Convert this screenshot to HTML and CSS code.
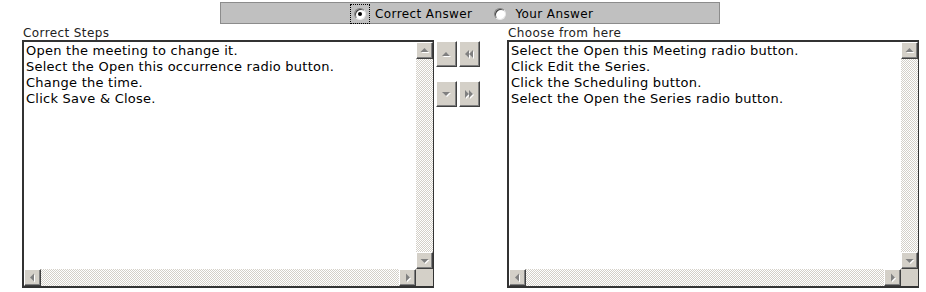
FILE: index.html
```html
<!DOCTYPE html>
<html lang="en">
<head>
    <meta charset="UTF-8">
    <title>Ordering Steps</title>
    <link rel="stylesheet" href="styles.css">
</head>
<body>
    <div class="answer-bar">
        <label class="choice">
            <span class="radio-wrap focused"><span class="radio checked"></span></span>
            <span>Correct Answer</span>
        </label>
        <label class="choice">
            <span class="radio-wrap"><span class="radio"></span></span>
            <span>Your Answer</span>
        </label>
    </div>

    <div class="workspace">
        <div class="panel">
            <div class="panel-title">Correct Steps</div>
            <div class="listbox">
                <div class="list-body">
                    <div class="list-text">
                        <div>Open the meeting to change it.</div>
                        <div>Select the Open this occurrence radio button.</div>
                        <div>Change the time.</div>
                        <div>Click Save &amp; Close.</div>
                    </div>
                    <div class="vscroll">
                        <div class="sbtn"><svg viewBox="0 0 15 15"><polygon class="shade" points="4.5,10 12.5,10 8.5,6"/><polygon points="3.5,9 11.5,9 7.5,5"/></svg></div>
                        <div class="track"></div>
                        <div class="sbtn"><svg viewBox="0 0 15 15"><polygon class="shade" points="4.5,7 12.5,7 8.5,11"/><polygon points="3.5,6 11.5,6 7.5,10"/></svg></div>
                    </div>
                </div>
                <div class="hscroll">
                    <div class="sbtn"><svg viewBox="0 0 15 15"><polygon class="shade" points="10,4.5 10,12.5 6,8.5"/><polygon points="9,3.5 9,11.5 5,7.5"/></svg></div>
                    <div class="track"></div>
                    <div class="sbtn"><svg viewBox="0 0 15 15"><polygon class="shade" points="7,4.5 7,12.5 11,8.5"/><polygon points="6,3.5 6,11.5 10,7.5"/></svg></div>
                    <div class="corner"></div>
                </div>
            </div>
        </div>

        <div class="movers">
            <div class="mover-row">
                <button class="mbtn" title="Move up"><svg viewBox="0 0 19 24"><polygon class="shade" points="6,15 14,15 10,11"/><polygon points="5,14 13,14 9,10"/></svg></button>
                <button class="mbtn" title="Move left"><svg viewBox="0 0 19 24"><polygon class="shade" points="10,9 10,17 6,13"/><polygon class="shade" points="14,9 14,17 10,13"/><polygon points="9,8 9,16 5,12"/><polygon points="13,8 13,16 9,12"/></svg></button>
            </div>
            <div class="mover-row">
                <button class="mbtn" title="Move down"><svg viewBox="0 0 19 24"><polygon class="shade" points="6,11 14,11 10,15"/><polygon points="5,10 13,10 9,14"/></svg></button>
                <button class="mbtn" title="Move right"><svg viewBox="0 0 19 24"><polygon class="shade" points="6,9 6,17 10,13"/><polygon class="shade" points="10,9 10,17 14,13"/><polygon points="5,8 5,16 9,12"/><polygon points="9,8 9,16 13,12"/></svg></button>
            </div>
        </div>

        <div class="panel">
            <div class="panel-title">Choose from here</div>
            <div class="listbox">
                <div class="list-body">
                    <div class="list-text">
                        <div>Select the Open this Meeting radio button.</div>
                        <div>Click Edit the Series.</div>
                        <div>Click the Scheduling button.</div>
                        <div>Select the Open the Series radio button.</div>
                    </div>
                    <div class="vscroll">
                        <div class="sbtn"><svg viewBox="0 0 15 15"><polygon class="shade" points="4.5,10 12.5,10 8.5,6"/><polygon points="3.5,9 11.5,9 7.5,5"/></svg></div>
                        <div class="track"></div>
                        <div class="sbtn"><svg viewBox="0 0 15 15"><polygon class="shade" points="4.5,7 12.5,7 8.5,11"/><polygon points="3.5,6 11.5,6 7.5,10"/></svg></div>
                    </div>
                </div>
                <div class="hscroll">
                    <div class="sbtn"><svg viewBox="0 0 15 15"><polygon class="shade" points="10,4.5 10,12.5 6,8.5"/><polygon points="9,3.5 9,11.5 5,7.5"/></svg></div>
                    <div class="track"></div>
                    <div class="sbtn"><svg viewBox="0 0 15 15"><polygon class="shade" points="7,4.5 7,12.5 11,8.5"/><polygon points="6,3.5 6,11.5 10,7.5"/></svg></div>
                    <div class="corner"></div>
                </div>
            </div>
        </div>
    </div>
</body>
</html>
```

FILE: styles.css
```css
* {
    margin: 0;
    padding: 0;
    box-sizing: border-box;
}

body {
    font-family: "DejaVu Sans", Verdana, sans-serif;
    font-size: 12px;
    letter-spacing: 0.4px;
    color: #000;
    background: #fff;
}

/* top toggle bar */
.answer-bar {
    width: 500px;
    height: 22px;
    margin: 2px 0 0 220px;
    background: #c0c0c0;
    border: 1px solid #8c8c8c;
    display: flex;
    align-items: center;
    padding-left: 129px;
    gap: 18px;
}

.choice {
    display: flex;
    align-items: center;
    gap: 5px;
    padding-top: 1px;
}

.radio-wrap {
    padding: 3px;
    border: 1px dotted transparent;
}

.radio-wrap.focused {
    border-color: #000;
}

.radio {
    width: 12px;
    height: 12px;
    border-radius: 50%;
    background: #fff;
    border: 1px solid #808080;
    border-right-color: #e8e8e8;
    border-bottom-color: #e8e8e8;
    box-shadow: inset 1px 1px 0 #404040;
    display: flex;
    align-items: center;
    justify-content: center;
}

.radio.checked::after {
    content: "";
    width: 4px;
    height: 4px;
    border-radius: 50%;
    background: #000;
}

/* main area */
.workspace {
    display: flex;
    margin: 2px 0 0 22px;
}

.panel-title {
    height: 14px;
    line-height: 14px;
    padding-left: 1px;
    color: #222;
}

.listbox {
    width: 412px;
    height: 248px;
    border: 2px solid #333;
    border-right-width: 1px;
    display: flex;
    flex-direction: column;
    background: #fff;
}

.list-body {
    flex: 1;
    display: flex;
    min-height: 0;
}

.list-text {
    flex: 1;
    padding: 1px 0 0 2px;
    font-size: 13px;
    letter-spacing: 0.25px;
    line-height: 16px;
    white-space: nowrap;
    overflow: hidden;
}

.vscroll {
    width: 17px;
    display: flex;
    flex-direction: column;
}

.hscroll {
    height: 17px;
    display: flex;
}

.track {
    flex: 1;
    background: repeating-conic-gradient(#fff 0 25%, #d4d0c8 0 50%) 0 0 / 2px 2px;
}

.sbtn {
    width: 17px;
    height: 17px;
    flex: none;
    background: #d4d0c8;
    border: 1px solid;
    border-color: #fff #404040 #404040 #fff;
    box-shadow: inset -1px -1px 0 #808080;
}

.sbtn svg,
.mbtn svg {
    display: block;
    width: 100%;
    height: 100%;
}

.sbtn polygon,
.mbtn polygon {
    fill: #808080;
}

.sbtn polygon.shade,
.mbtn polygon.shade {
    fill: #fff;
}

.corner {
    width: 17px;
    flex: none;
    background: #d4d0c8;
}

/* move buttons */
.movers {
    width: 73px;
    padding: 15px 0 0 2px;
    display: flex;
    flex-direction: column;
    gap: 14px;
}

.mover-row {
    display: flex;
    gap: 2px;
}

.mbtn {
    width: 21px;
    height: 26px;
    background: #d4d0c8;
    border: 1px solid;
    border-color: #fff #404040 #404040 #fff;
    box-shadow: inset -1px -1px 0 #808080;
}
```
